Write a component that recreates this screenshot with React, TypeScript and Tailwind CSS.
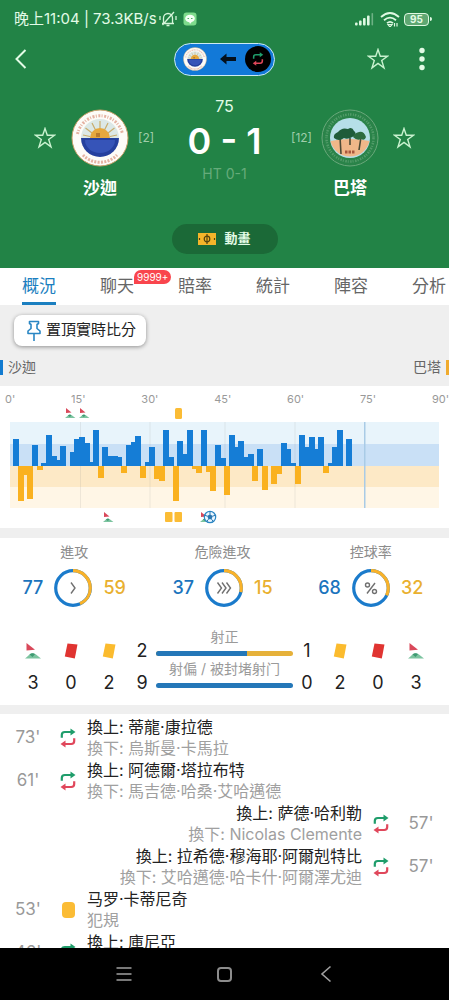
import { useState } from "react";

type Side = "home" | "away";

type MatchEvent = {
  minute: string;
  kind: "sub" | "card";
  side: Side;
  title: string;
  detail: string;
};

const TABS = ["概況", "聊天", "賠率", "統計", "陣容", "分析"];

const MINUTES = ["0'", "15'", "30'", "45'", "60'", "75'", "90'"];

// pressure per minute, positive = home, negative = away
const PRESSURE = [
  27, -35, -9, -33, 21, -4, 3, 31, 10, 6, 20, 0, 14, 27, 29, 23, 4, 36,
  -12, 19, 10, 10, 9, -7, 21, 24, 30, -12, 4, 19, -13, -15, 36, 9, -35, 25,
  12, 36, -3, -7, 36, -6, -25, 21, 8, -29, 31, 19, 25, 9, 12, -15, 17, -24,
  0, -18, -8, 23, 17, 3, -18, 31, 19, 29, 17, 29, -7, 3, 19, 36, 0, 27,
];

const EVENTS: MatchEvent[] = [
  { minute: "73'", kind: "sub", side: "home", title: "換上: 蒂龍·康拉德", detail: "換下: 烏斯曼·卡馬拉" },
  { minute: "61'", kind: "sub", side: "home", title: "換上: 阿德爾·塔拉布特", detail: "換下: 馬吉德·哈桑·艾哈邁德" },
  { minute: "57'", kind: "sub", side: "away", title: "換上: 萨德·哈利勒", detail: "換下: Nicolas Clemente" },
  { minute: "57'", kind: "sub", side: "away", title: "換上: 拉希德·穆海耶·阿爾剋特比", detail: "換下: 艾哈邁德·哈卡什·阿爾澤尤迪" },
  { minute: "53'", kind: "card", side: "home", title: "马罗·卡蒂尼奇", detail: "犯規" },
  { minute: "46'", kind: "sub", side: "home", title: "換上: 庫尼亞", detail: "" },
];

function StarIcon() {
  return (
    <svg viewBox="0 0 22 22" className="size-[22px]" fill="none" stroke="#c9f2cf" strokeWidth="1.4" strokeLinejoin="miter">
      <path d="M11 1.5 13.3 8.3H20.5L14.7 12.5 17 19.8 11 15.4 5 19.8 7.3 12.5 1.5 8.3H8.7Z" />
    </svg>
  );
}

function SwapIcon({ className = "h-5 w-4" }: { className?: string }) {
  return (
    <svg viewBox="0 0 16 20" className={className} fill="none" strokeWidth="2.2">
      <path d="M1.8 9.800V7Q1.800 4 4.800 4H11" stroke="#1f9d6b" />
      <path d="M10.500 .500 15.500 4 10.500 7.500Z" fill="#1f9d6b" />
      <path d="M14.200 10.200V13Q14.200 16 11.200 16H5" stroke="#e0475b" />
      <path d="M5.500 12.500 .500 16 5.500 19.500Z" fill="#e0475b" />
    </svg>
  );
}

function CornerIcon() {
  return (
    <svg viewBox="0 0 16 16" className="size-4">
      <CornerShape />
    </svg>
  );
}

function CornerShape() {
  return (
    <>
      <path d="M1.500 0 10 6.800 1.500 7.500Z" fill="#d9485a" />
      <path d="M0 15.500Q2.500 13.500 4.500 11.500 7.500 9 11 11.500L16 15.500Z" fill="#7cc4a0" />
      <path d="M4.500 11.500Q7.500 9 10 11.200L7.500 14Z" fill="#3f9a72" />
    </>
  );
}

function TiltedCard({ color }: { color: string }) {
  return (
    <svg viewBox="0 0 14 16" className="h-4 w-3.5">
      <path d="M3.500 .500 13.500 1.500 10.800 15.500 .800 13.500Z" fill={color} />
    </svg>
  );
}

function HomeLogo({ className }: { className: string }) {
  return (
    <svg viewBox="0 0 58 58" className={className}>
      <circle cx="29" cy="29" r="28" fill="#fdfcf8" stroke="#c9a06a" strokeWidth="1" />
      <path d="M6.500 25A23 23 0 0 1 51.500 25" fill="none" stroke="#dc9a86" strokeWidth="3" strokeDasharray="2 1.300 1 1.600" opacity=".75" />
      <path d="M12 46A23.500 23.500 0 0 0 46 46" fill="none" stroke="#dc9a86" strokeWidth="3" strokeDasharray="2 1.300" opacity=".75" />
      <path d="M10 29a19 19 0 0 1 38 0Z" fill="#dce8e6" />
      <path d="M29 20V12M24.500 21 21 14M33.500 21 37 14M21 24 14.500 19M37 24 43.500 19M19 27.500 12 26M39 27.500 46 26" stroke="#c8ad6d" strokeWidth="1.200" />
      <path d="M19 29a10 10 0 0 1 20 0Z" fill="#e6a83d" />
      <path d="M25 24h4v4h-4Z" fill="#b97b2c" />
      <path d="M10 29H48a19 19 0 0 1-38 0Z" fill="#25409e" />
      <path d="M14 31H44a15 13 0 0 1-30 0Z" fill="#3654b8" />
    </svg>
  );
}

function AwayLogo({ className }: { className: string }) {
  return (
    <svg viewBox="0 0 58 58" className={className}>
      <circle cx="29" cy="29" r="28" fill="#2a8349" stroke="#6aa87b" strokeWidth="1" />
      <circle cx="29" cy="29" r="23.500" fill="none" stroke="#5da272" strokeWidth="2.500" strokeDasharray="1.500 1.500 1 1" opacity=".8" />
      <circle cx="29" cy="29" r="20" fill="#b5dfe8" />
      <path d="M9.500 32Q29 28 48.500 32A20 20 0 0 1 9.500 32Z" fill="#f0b789" />
      <path d="M19 28 20 45M29 29V36M40 28 38 41" stroke="#4d4a35" strokeWidth="1.600" />
      <path d="M13 29Q12 25 17 23 21 18 27 20 31 17 33 22 36 24 33 27 27 31 23 29 18 33 13 29Z" fill="#1f5c3a" />
      <path d="M32 28Q33 24 38 23 43 22 45 28 44 32 40 30 36 32 32 28Z" fill="#2c6b3f" />
      <path d="M24 43h10" stroke="#a9573c" strokeWidth="3" strokeDasharray="2.500 1" />
    </svg>
  );
}

function StatusBar() {
  return (
    <div className="flex h-[38px] items-center pl-[14px] pr-[17px] text-[15px] text-[#e3fbe6]">
      <span className="whitespace-nowrap">晚上11:04 | 73.3KB/s</span>
      <svg viewBox="0 0 18 16" className="ml-0.5 h-4 w-[18px]" fill="none" stroke="#d5f5da" strokeWidth="1.300">
        <path d="M4.500 12V7a4.500 4.500 0 0 1 9 0V12M3 12.500H15M7.500 14.500H10.500M15 1 3.500 14M1 5V9M17 5V9" />
      </svg>
      <svg viewBox="0 0 14 14" className="ml-1.5 size-3.5">
        <rect x=".500" y=".500" width="13" height="13" rx="3" fill="#7edb8c" />
        <ellipse cx="7" cy="6.500" rx="4.800" ry="3.800" fill="#f4fff5" />
        <path d="M6 9.500H9L7 12Z" fill="#f4fff5" />
        <path d="M4.500 6.500H6M8 6.500H9.500" stroke="#4fae62" />
      </svg>
      <svg viewBox="0 0 19 13" className="ml-auto h-[13px] w-[19px]" fill="#dff8e2">
        <rect x="0" y="9.500" width="2.600" height="3" rx="1" />
        <rect x="4" y="7.500" width="2.600" height="5" rx="1" />
        <rect x="8" y="5" width="2.600" height="7.500" rx="1" />
        <rect x="12" y="2.500" width="2.600" height="10" rx="1" />
        <rect x="16.500" y="0" width="1.600" height="12.500" rx=".800" opacity=".4" />
      </svg>
      <svg viewBox="0 0 20 15" className="ml-1.5 h-[15px] w-5" fill="none" stroke="#dff8e2" strokeWidth="1.800">
        <path d="M1 5Q10-3 19 5M4 8.200Q10 3 16 8.200M7 11.200Q10 8.500 13 11.200" />
        <path d="M8 12.500H12L10 15ZM14.500 11V14.500M17 11V14.500" strokeWidth="1.200" />
      </svg>
      <span className="ml-1 flex h-[13px] w-[25px] items-center justify-center rounded-[4px] border border-[#dff8e2] bg-[#5fa772] text-[10px] font-bold leading-none">
        95
      </span>
      <span className="ml-px h-1 w-0.5 rounded-r bg-[#dff8e2]" />
    </div>
  );
}

function NavRow() {
  return (
    <div className="grid h-[42px] grid-cols-[1fr_auto_1fr] items-center px-3.5">
      <button aria-label="返回" className="w-fit">
        <svg viewBox="0 0 14 22" className="h-[22px] w-3.5" fill="none" stroke="#e3fbe6" strokeWidth="2">
          <path d="M11.500 2 2.500 11 11.500 20" />
        </svg>
      </button>
      <button
        aria-label="切換比賽"
        className="flex h-[33px] w-[101px] items-center justify-between rounded-full border border-[#cdeaf2] bg-[#1279d8] pl-2 pr-[3px]"
      >
        <HomeLogo className="size-6" />
        <svg viewBox="0 0 16 12" className="ml-1 h-3 w-4" fill="#04101c">
          <path d="M0 6 6.500 .500V4H16V8H6.500V11.500Z" />
        </svg>
        <span className="flex size-[26px] items-center justify-center rounded-full bg-black">
          <SwapIcon className="h-3.5 w-3" />
        </span>
      </button>
      <div className="flex items-center justify-end gap-5">
        <button aria-label="收藏">
          <StarIcon />
        </button>
        <button aria-label="更多" className="flex w-[26px] justify-center">
          <svg viewBox="0 0 6 24" className="h-6 w-1.5" fill="#e3fbe6">
            <circle cx="3" cy="3.500" r="2.700" />
            <circle cx="3" cy="12" r="2.700" />
            <circle cx="3" cy="20.500" r="2.700" />
          </svg>
        </button>
      </div>
    </div>
  );
}

function Team({ name, rank, side }: { name: string; rank: string; side: Side }) {
  const home = side === "home";
  return (
    <div className={`flex items-start pt-[13px] ${home ? "" : "flex-row-reverse"}`}>
      <button aria-label={`收藏 ${name}`} className={`mt-[18px] ${home ? "mr-[15px]" : "ml-[14px]"}`}>
        <StarIcon />
      </button>
      <div className="flex w-[58px] flex-col items-center gap-[11px]">
        {home ? <HomeLogo className="size-[58px]" /> : <AwayLogo className="size-[58px]" />}
        <p className="text-[17px] font-bold leading-5 text-white">{name}</p>
      </div>
      <span className={`mt-[18px] text-xs leading-[22px] text-[#9fcdaa] ${home ? "ml-[9px]" : "mr-[9px]"}`}>[{rank}]</span>
    </div>
  );
}

function MatchHeader() {
  return (
    <header className="bg-[#228346]">
      <StatusBar />
      <NavRow />
      <div className="grid grid-cols-[1fr_auto_1fr] px-[34px] pt-4">
        <Team name="沙迦" rank="2" side="home" />
        <div className="text-center">
          <p className="text-base leading-5 text-[#e3fbe6]">75</p>
          <p className="whitespace-nowrap text-[36px] font-semibold leading-[50px] text-white">0 - 1</p>
          <p className="text-sm leading-4 text-[#66ab7b]">HT 0-1</p>
        </div>
        <Team name="巴塔" rank="12" side="away" />
      </div>
      <div className="flex justify-center pb-3.5 pt-[26px]">
        <button className="flex h-[30px] w-[106px] items-center justify-center gap-2 rounded-full bg-[#1b6937] text-[13px] font-bold text-[#e3fbe6]">
          <svg viewBox="0 0 18 12" className="h-3 w-[18px]">
            <rect width="18" height="12" fill="#f5b52a" />
            <path d="M9 1V11M1.500 5V7M16.500 5V7" fill="none" stroke="#54430f" strokeWidth="1.200" />
            <circle cx="9" cy="6" r="2.800" fill="none" stroke="#54430f" strokeWidth="1.200" />
          </svg>
          動畫
        </button>
      </div>
    </header>
  );
}

function Tabs() {
  const [active, setActive] = useState("概況");
  return (
    <nav className="flex h-[37px] gap-11 overflow-hidden bg-white pl-[22px]">
      {TABS.map((tab) => (
        <button
          key={tab}
          onClick={() => setActive(tab)}
          className={`relative shrink-0 border-b-[3px] pt-0.5 text-[17px] leading-8 ${
            tab === active ? "border-[#1b7fc0] text-[#1b7fc0]" : "border-transparent text-[#666666]"
          }`}
        >
          {tab}
          {tab === "聊天" && (
            <span className="absolute left-[34px] top-0.5 rounded-full rounded-bl-none bg-[#f9454d] px-[3px] text-[10px] leading-[14px] text-white">
              9999+
            </span>
          )}
        </button>
      ))}
    </nav>
  );
}

function TeamBar() {
  return (
    <section className="bg-[#efefef] pb-[9px] pt-2.5">
      <button className="ml-3.5 flex h-[31px] items-center gap-1 rounded-lg bg-white pl-3 pr-2.5 text-[15px] text-[#222222] shadow-[0_1px_4px_rgba(0,0,0,0.4)]">
        <svg viewBox="0 0 16 22" className="h-[22px] w-4" fill="none" stroke="#2a86c4" strokeWidth="1.600" strokeLinejoin="round">
          <path d="M3.500 1.500H12.500V3.500L11 4.500V8.500L14 11V13.500H2V11L5 8.500V4.500L3.500 3.500ZM8 13.500V21" />
        </svg>
        置頂實時比分
      </button>
      <div className="mt-[11px] flex h-5 items-center justify-between text-sm text-[#666666]">
        <span className="flex items-center gap-[5px]">
          <i className="h-[15px] w-[3px] bg-[#127bd0]" />
          沙迦
        </span>
        <span className="flex items-center gap-[5px]">
          巴塔
          <i className="h-[15px] w-[3px] bg-[#f0ab2e]" />
        </span>
      </div>
    </section>
  );
}

function PressureChart() {
  return (
    <section className="bg-white pb-1 pt-[5px]">
      <div className="flex justify-between pl-[5px] text-[11px] leading-4 text-[#999999]">
        {MINUTES.map((m) => (
          <span key={m}>{m}</span>
        ))}
      </div>
      <div className="px-2.5">
        <svg viewBox="0 0 429 117" className="w-full">
          <rect y="15" width="429" height="22" fill="#e8f4fb" />
          <rect y="37" width="429" height="22" fill="#c9e0f6" />
          <rect y="59" width="429" height="21" fill="#fde9c6" />
          <rect y="80" width="429" height="21" fill="#fff6e6" />
          <path d="M70.500 15V101M140 15V101M215 15V101M285 15V101" stroke="#8a8a8a" opacity=".14" />
          <rect x="354" y="15" width="1.500" height="86" fill="#a9cbe6" />
          {PRESSURE.map((v, i) =>
            v === 0 ? null : (
              <rect
                key={i}
                x={Math.round(3.3 + i * 4.69)}
                y={v > 0 ? 59 - v : 59}
                width="6"
                height={Math.abs(v)}
                fill={v > 0 ? "#157dd6" : "#fab11f"}
              />
            ),
          )}
          <g transform="translate(55 1) scale(.65)"><CornerShape /></g>
          <g transform="translate(69 1) scale(.65)"><CornerShape /></g>
          <rect x="165" y="1" width="7" height="11" rx="1.500" fill="#fbbc35" />
          <g transform="translate(93 105) scale(.65)"><CornerShape /></g>
          <rect x="155" y="105" width="7.500" height="10" rx="1" fill="#fbbc35" />
          <rect x="164.500" y="105" width="7.500" height="10" rx="1" fill="#fbbc35" />
          <g transform="translate(190 105) scale(.65)"><CornerShape /></g>
          <g transform="translate(200 110)">
            <circle r="5.700" fill="#eaf6ff" stroke="#2a86c4" strokeWidth="1.200" />
            <path d="M0-2.800 2.700-.900 1.600 2.300H-1.600L-2.700-.900Z" fill="#2a76b0" />
            <path d="M0-5.500V-2.500M5.300-1.700 2.500-.800M3.300 4.500 1.500 2.200M-3.300 4.500-1.500 2.200M-5.300-1.700-2.500-.800" stroke="#2a76b0" />
          </g>
        </svg>
      </div>
    </section>
  );
}

function Ring({ home, away, icon }: { home: number; away: number; icon: string }) {
  const share = (away / (home + away)) * 100;
  return (
    <svg viewBox="0 0 38 38" className="size-[38px]" fill="none">
      <circle cx="19" cy="19" r="17.300" stroke="#1b7bcb" strokeWidth="3.200" />
      <circle
        cx="19"
        cy="19"
        r="17.300"
        stroke="#f9b22a"
        strokeWidth="3.200"
        pathLength="100"
        strokeDasharray={`${share} 100`}
        transform="rotate(-90 19 19)"
      />
      <g stroke="#707070" strokeWidth="1.400">
        {icon === "single" && <path d="M17 13.500 21 19 17 24.500" />}
        {icon === "triple" && <path d="M12.500 13.500 16.500 19 12.500 24.500M17 13.500 21 19 17 24.500M21.500 13.500 25.500 19 21.500 24.500" />}
        {icon === "percent" && (
          <>
            <circle cx="15.500" cy="16" r="2" />
            <circle cx="22.500" cy="22.500" r="2" />
            <path d="M23 14 15 24.500" />
          </>
        )}
      </g>
    </svg>
  );
}

function RingStat({ label, home, away, icon }: { label: string; home: number; away: number; icon: string }) {
  return (
    <div className="flex flex-1 flex-col items-center">
      <p className="text-sm leading-5 text-[#8c8c8c]">{label}</p>
      <div className="mt-[7px] flex items-center gap-[11px] text-lg font-medium">
        <span className="text-[#1b74bd]">{home}</span>
        <Ring home={home} away={away} icon={icon} />
        <span className="text-[#e9b02f]">{away}</span>
      </div>
    </div>
  );
}

function ShotBar({ label, home, away }: { label: string; home: number; away: number }) {
  return (
    <div className="h-8">
      <p className="whitespace-nowrap text-center text-[14px] leading-5 text-[#9a9a9a]">{label}</p>
      <div className="mt-1 flex h-[5px] overflow-hidden rounded-full bg-[#e6b13a]">
        <i className="bg-[#2477b8]" style={{ width: `${(home / (home + away)) * 100}%` }} />
      </div>
    </div>
  );
}

function Counts({ side }: { side: Side }) {
  const items = [
    { icon: <CornerIcon />, value: 3 },
    { icon: <TiltedCard color="#e03431" />, value: 0 },
    { icon: <TiltedCard color="#fbbb2e" />, value: 2 },
  ];
  if (side === "away") items.reverse();
  return (
    <div className="grid w-[114px] grid-cols-3 pt-2">
      {items.map(({ icon, value }, i) => (
        <div key={i} className="flex flex-col items-center">
          <span className="flex h-8 items-center">{icon}</span>
          <span className="leading-8">{value}</span>
        </div>
      ))}
    </div>
  );
}

function Stats() {
  return (
    <section className="bg-white pb-1.5 pt-1">
      <div className="flex pr-1">
        <RingStat label="進攻" home={77} away={59} icon="single" />
        <RingStat label="危險進攻" home={37} away={15} icon="triple" />
        <RingStat label="控球率" home={68} away={32} icon="percent" />
      </div>
      <div className="mt-5 flex px-3.5 text-lg text-[#222222]">
        <Counts side="home" />
        <div className="flex w-7 flex-col items-center pt-2 leading-8">
          <span>2</span>
          <span>9</span>
        </div>
        <div className="flex-1">
          <ShotBar label="射正" home={2} away={1} />
          <ShotBar label="射偏 / 被封堵射门" home={9} away={0} />
        </div>
        <div className="flex w-7 flex-col items-center pt-2 leading-8">
          <span>1</span>
          <span>0</span>
        </div>
        <Counts side="away" />
      </div>
    </section>
  );
}

function EventRow({ minute, kind, side, title, detail }: MatchEvent) {
  const away = side === "away";
  return (
    <li className={`flex items-center ${away ? "flex-row-reverse text-right" : ""}`}>
      <span className="w-14 text-center text-[17px] text-[#999999]">{minute}</span>
      <span className="flex w-6 justify-center">
        {kind === "sub" ? <SwapIcon /> : <i className="h-4 w-[13px] rounded-sm bg-[#fbbc35]" />}
      </span>
      <div className="mx-[7px] whitespace-nowrap text-base">
        <p className="h-[22px] leading-[22px] text-[#222222]">{title}</p>
        <p className="h-[21px] leading-[21px] text-[#a0a0a0]">{detail}</p>
      </div>
    </li>
  );
}

function SystemNav() {
  return (
    <footer className="flex h-[52px] shrink-0 items-center justify-center bg-black">
      <button aria-label="最近" className="flex w-[101px] justify-center">
        <svg viewBox="0 0 16 16" className="size-4" stroke="#a0a0a0" strokeWidth="1.600">
          <path d="M.500 2H15.500M.500 8H15.500M.500 14H15.500" />
        </svg>
      </button>
      <button aria-label="主頁" className="flex w-[101px] justify-center">
        <i className="size-[15px] rounded-[4px] border-2 border-[#8c8c8c]" />
      </button>
      <button aria-label="返回" className="flex w-[101px] justify-center">
        <svg viewBox="0 0 12 18" className="h-[18px] w-3" fill="none" stroke="#a0a0a0" strokeWidth="1.600">
          <path d="M10.500 1.500 2 9 10.500 16.500" />
        </svg>
      </button>
    </footer>
  );
}

export default function App() {
  return (
    <div className="flex h-screen flex-col bg-white font-[Inter,'Noto_Sans_CJK_TC',sans-serif]">
      <main className="min-h-0 flex-1 overflow-hidden">
        <MatchHeader />
        <Tabs />
        <TeamBar />
        <PressureChart />
        <div className="h-2.5 bg-[#efefef]" />
        <Stats />
        <div className="h-[9px] bg-[#efefef]" />
        <ul className="pt-0.5">
          {EVENTS.map((event, i) => (
            <EventRow key={i} {...event} />
          ))}
        </ul>
      </main>
      <SystemNav />
    </div>
  );
}
